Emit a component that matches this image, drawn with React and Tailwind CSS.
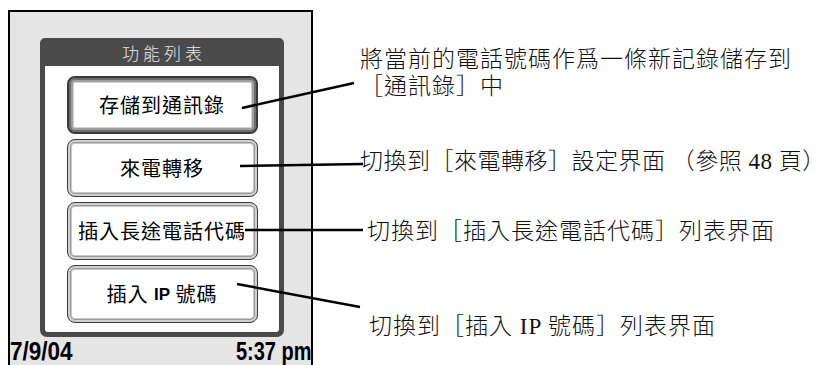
import React from "react";

const btnBase =
  "w-[191px] h-[58px] rounded-[8px] bg-white flex items-center justify-center text-[20px] tracking-[1px] leading-none text-black font-['Noto_Sans_CJK_TC',sans-serif] font-normal";
const btnNormal =
  "border border-[#3c3c3c] shadow-[inset_0_0_0_2px_#d0d0d0,inset_0_0_0_3px_#9a9a9a,inset_0_0_0_4px_#c8c8c8]";
const btnSelected =
  "border-2 border-[#3a3a3a] shadow-[inset_0_0_0_2px_#6e6e6e,inset_0_0_0_4px_#a0a0a0,inset_0_0_0_5px_#d4d4d4]";

function Button({ children, selected }) {
  return <div className={`${btnBase} ${selected ? btnSelected : btnNormal}`}>{children}</div>;
}

export default function App() {
  return (
    <div className="relative w-[828px] h-[365px] bg-white overflow-hidden flex">
      {/* device screen */}
      <div className="ml-[8px] mt-[10px] w-[305px] h-[360px] border-2 border-b-0 border-black bg-[#e5e5e5] flex flex-col shrink-0">
        <div className="ml-[30px] mt-[26px] w-[244px] h-[299px] bg-[#4a4a4a] rounded-t-[5px] rounded-b-[7px] px-[5px] pb-[5px] flex flex-col">
          <div className="h-[28px] flex items-center justify-center text-[17px] tracking-[4px] pl-[4px] text-[#e8e8e8] font-['Noto_Sans_CJK_TC',sans-serif] font-light leading-none">
            功能列表
          </div>
          <div className="flex-1 bg-white rounded-b-[3px] flex flex-col items-center pt-[10px] gap-[5px]">
            <Button selected>存儲到通訊錄</Button>
            <Button>來電轉移</Button>
            <Button>插入長途電話代碼</Button>
            <Button>
              插入&nbsp;<span className="font-['Liberation_Sans',sans-serif] font-bold text-[17px] tracking-normal">IP</span>&nbsp;號碼
            </Button>
          </div>
        </div>
        <div className="mt-[2px] flex justify-between items-start text-[25px] leading-[25px] font-bold text-black font-['Liberation_Sans',sans-serif]">
          <span className="inline-block origin-left scale-x-[0.9]">7/9/04</span>
          <span className="inline-block origin-right scale-x-[0.8]">5:37 pm</span>
        </div>
      </div>

      {/* callout texts */}
      <div className="ml-[47px] pt-[46px] flex flex-col text-[23px] leading-[27px] tracking-[1px] text-[#111] font-light font-['Liberation_Serif','Noto_Sans_CJK_TC',serif] whitespace-nowrap">
        <div>
          <div>將當前的電話號碼作爲一條新記錄儲存到</div>
          <div>［通訊錄］中</div>
        </div>
        <div className="mt-[48px] tracking-[0.5px]">切換到［來電轉移］設定界面 （參照 48 頁）</div>
        <div className="mt-[43px] ml-[7px]">切換到［插入長途電話代碼］列表界面</div>
        <div className="mt-[68px] ml-[9px]">切換到［插入 IP 號碼］列表界面</div>
      </div>

      {/* leader lines */}
      <svg className="absolute inset-0 pointer-events-none" width="828" height="365" viewBox="0 0 828 365">
        <g stroke="#000" strokeWidth="2.5" strokeLinecap="butt" fill="none">
          <line x1="242" y1="108" x2="354" y2="83" />
          <line x1="240" y1="166" x2="363" y2="164" />
          <line x1="245" y1="230" x2="363" y2="230" />
          <line x1="237" y1="284" x2="360" y2="307" />
        </g>
      </svg>
    </div>
  );
}
